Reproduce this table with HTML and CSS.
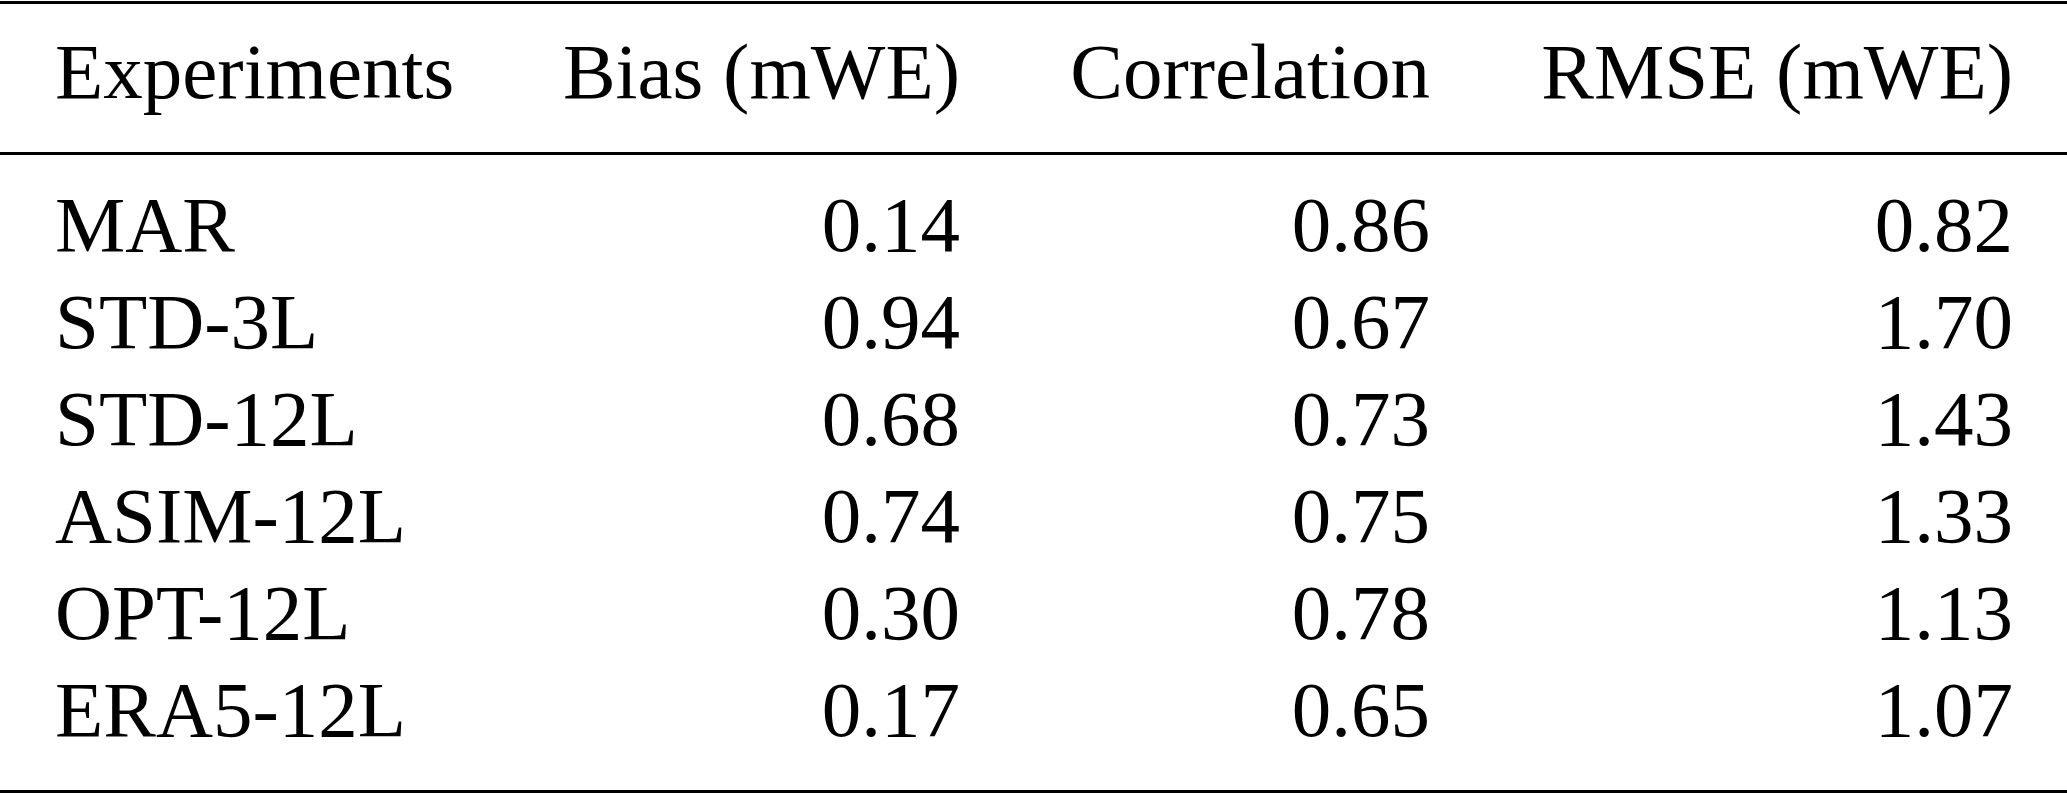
FILE: index.html
```html
<!DOCTYPE html>
<html>
<head>
<meta charset="utf-8">
<link rel="stylesheet" href="styles.css">
</head>
<body>
<div class="table">
  <div class="row head">
    <div class="cell">Experiments</div>
    <div class="cell num">Bias (mWE)</div>
    <div class="cell num">Correlation</div>
    <div class="cell num">RMSE (mWE)</div>
  </div>
  <div class="body">
    <div class="row"><div class="cell">MAR</div><div class="cell num">0.14</div><div class="cell num">0.86</div><div class="cell num">0.82</div></div>
    <div class="row"><div class="cell">STD-3L</div><div class="cell num">0.94</div><div class="cell num">0.67</div><div class="cell num">1.70</div></div>
    <div class="row"><div class="cell">STD-12L</div><div class="cell num">0.68</div><div class="cell num">0.73</div><div class="cell num">1.43</div></div>
    <div class="row"><div class="cell">ASIM-12L</div><div class="cell num">0.74</div><div class="cell num">0.75</div><div class="cell num">1.33</div></div>
    <div class="row"><div class="cell">OPT-12L</div><div class="cell num">0.30</div><div class="cell num">0.78</div><div class="cell num">1.13</div></div>
    <div class="row"><div class="cell">ERA5-12L</div><div class="cell num">0.17</div><div class="cell num">0.65</div><div class="cell num">1.07</div></div>
  </div>
</div>
</body>
</html>
```
FILE: styles.css
```css
html, body {
  margin: 0;
  padding: 0;
  background: #fff;
}
body {
  padding-top: 1px;
}
.table {
  width: 2067px;
  border-top: 3px solid #000;
  font-family: "Liberation Serif", "Times New Roman", serif;
  font-size: 79px;
  line-height: 97px;
  color: #000;
}
.row {
  display: grid;
  grid-template-columns: 445px 460px 470px 583px;
  padding: 0 54px 0 55px;
  height: 97px;
}
.head {
  padding-top: 19px;
  padding-bottom: 32px;
  border-bottom: 3px solid #000;
}
.body {
  padding-top: 21px;
  padding-bottom: 32px;
  border-bottom: 3px solid #000;
}
.cell {
  white-space: nowrap;
}
.num {
  text-align: right;
}
```
